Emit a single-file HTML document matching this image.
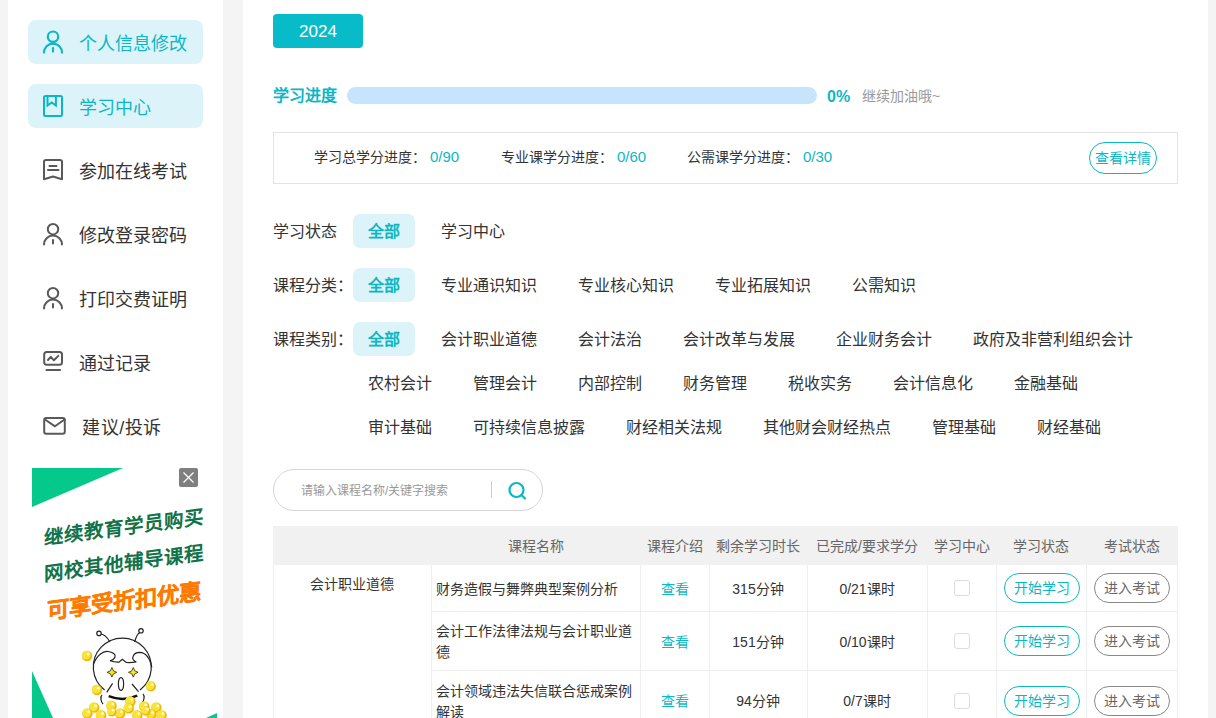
<!DOCTYPE html>
<html lang="zh-CN"><head><meta charset="utf-8">
<style>
*{box-sizing:border-box;margin:0;padding:0}
html,body{width:1216px;height:718px;overflow:hidden;background:#f4f4f4;font-family:"Liberation Sans",sans-serif;color:#333}
.side{position:absolute;left:8px;top:0;width:215px;height:718px;background:#fff}
.nav{position:absolute;left:28px;width:175px;height:44px;border-radius:8px;font-size:18px;color:#333;line-height:44px}
.nav.on{background:#dcf4f9;color:#0bb7c5}
.nav svg{position:absolute;left:0;top:0}
.nav span{position:absolute;left:51px;top:2px;white-space:nowrap}
.main{position:absolute;left:243px;top:0;width:965px;height:718px;background:#fff}
.abs{position:absolute}
.teal{color:#0bb7c5}
.stat{font-size:14px;line-height:22px;color:#333;white-space:nowrap}
.stat b{font-weight:normal;color:#0bb7c5;margin-left:4px;font-size:15px}
.frow{position:absolute;left:273px;width:905px;font-size:16px}
.frow .lab{position:absolute;left:0;top:0;width:80px;line-height:36px;white-space:nowrap}
.frow .items{position:absolute;left:80px;top:0;width:825px;display:flex;flex-wrap:wrap}
.frow i{font-style:normal;display:block;height:34px;line-height:36px;padding:0 15px;margin:0 11px 10px 0;border-radius:7px;white-space:nowrap}
.frow i.on{background:#dcf4f9;color:#0bb7c5;font-weight:bold}
.th{position:absolute;top:527px;height:39px;line-height:39px;text-align:center;font-size:14px;color:#666;white-space:nowrap}
.td{position:absolute;padding-top:2px;display:flex;align-items:center;justify-content:center;font-size:14px;line-height:21px;text-align:center}
.td.name{justify-content:flex-start;text-align:left}
.cb{display:block;margin-top:-2px;width:16px;height:16px;border:1px solid #ddd;border-radius:3px}
.btn{font-style:normal;display:block;margin-top:-2px;width:76px;height:30px;border-radius:15px;line-height:28px;text-align:center;font-size:14px}
.bt{border:1px solid #0bb7c5;color:#0bb7c5;margin-left:2px}
.bg{border:1px solid #888;color:#666}
.bt1{position:absolute;left:12px;width:160px;height:24px;line-height:24px;font-size:19.5px;font-weight:bold;white-space:nowrap;transform:skewY(-7.5deg);transform-origin:center center;text-align:center;letter-spacing:0}
.bt1.big{font-size:22.4px;font-weight:900;-webkit-text-stroke:0.3px #ff7a00}
.cl{}.cl2{}
</style></head><body>
<div class="side"></div>
<!-- sidebar nav -->
<div class="nav on" style="top:20px">
 <svg width="60" height="44" viewBox="28 20 60 44"><g fill="none" stroke="#0bb7c5" stroke-width="2.2" stroke-linecap="round"><circle cx="53" cy="36.7" r="5.2"/><path d="M44 52.6A9 9 0 0 1 62 52.6"/><path d="M53 48v3.6"/></g></svg>
 <span>个人信息修改</span></div>
<div class="nav on" style="top:84px">
 <svg width="60" height="44" viewBox="28 84 60 44"><g fill="none" stroke="#0bb7c5" stroke-width="2"><rect x="44" y="96" width="18" height="20" rx="1.5"/><path d="M47.5 96v9.5l4.2-3 4.2 3V96"/></g></svg>
 <span>学习中心</span></div>
<div class="nav" style="top:148px">
 <svg width="60" height="44" viewBox="28 148 60 44"><g fill="none" stroke="#595959" stroke-width="2" stroke-linejoin="round" stroke-linecap="round"><path d="M46 160h14a2 2 0 0 1 2 2v17.3l-9-2.8-9 2.8V162a2 2 0 0 1 2-2z"/><path d="M49.5 166h7M48 170h10.5"/></g></svg>
 <span>参加在线考试</span></div>
<div class="nav" style="top:212px">
 <svg width="60" height="44" viewBox="28 212 60 44"><g fill="none" stroke="#595959" stroke-width="2" stroke-linecap="round"><circle cx="53" cy="229.2" r="5.2"/><path d="M44 244.6A9 9 0 0 1 62 244.6"/><path d="M53 240v3.6"/></g></svg>
 <span>修改登录密码</span></div>
<div class="nav" style="top:276px">
 <svg width="60" height="44" viewBox="28 276 60 44"><g fill="none" stroke="#595959" stroke-width="2" stroke-linecap="round"><circle cx="53" cy="293.2" r="5.2"/><path d="M44 308.6A9 9 0 0 1 62 308.6"/><path d="M53 304v3.6"/></g></svg>
 <span>打印交费证明</span></div>
<div class="nav" style="top:340px">
 <svg width="60" height="44" viewBox="28 340 60 44"><g fill="none" stroke="#595959" stroke-width="2" stroke-linecap="round" stroke-linejoin="round"><rect x="44.2" y="351.9" width="17.8" height="12.8" rx="2.5"/><path d="M46.5 369.9h13.5"/><path d="M48 360l2.8-3.2 3.1 3.5 4.4-4.4"/></g></svg>
 <span>通过记录</span></div>
<div class="nav" style="top:404px">
 <svg width="60" height="44" viewBox="28 404 60 44"><g fill="none" stroke="#595959" stroke-width="2" stroke-linecap="round" stroke-linejoin="round"><rect x="44.2" y="418.1" width="20.6" height="15.6" rx="2"/><path d="M45 419.5l10 6.8 9.5-6.8"/></g></svg>
 <span style="left:54px;letter-spacing:0.6px">建议/投诉</span></div>


<div class="abs" style="left:32px;top:468px;width:185px;height:250px;overflow:hidden;background:#fff">
<svg width="185" height="250" viewBox="32 468 185 250" style="position:absolute;left:0;top:0">
<polygon points="32,468 123,468 32,507" fill="#05c98a"/>
<polygon points="32,671 32,718 53,718" fill="#05c98a"/>
<polygon points="217,713 217,718 206,718" fill="#05c98a"/>
<rect x="179" y="468" width="19" height="19" rx="2" fill="#7f7f7f"/>
<path d="M183.5 472.5l10 10M193.5 472.5l-10 10" stroke="#fff" stroke-width="1.3"/>
<g fill="none" stroke="#222" stroke-width="1.2">
<path d="M110 642C107 637 103 634 100.5 634"/><circle cx="99" cy="633.4" r="2.2" fill="#fff"/>
<path d="M134.6 642C136 637 138.5 633 140 632.5"/><circle cx="141" cy="630.8" r="2.2" fill="#fff"/>
<path d="M104.6 690A29 29 0 1 1 140 690"/>
<path d="M93.5 664C97 655 103 651 108 651.5c5 .5 8 3 7 5.5-1 2.5-3 3.5-5 3.8 3 1 6 1.5 9 1.3l3.3-2.8 4 3.2c3 .2 7 0 10-.6-2-.5-4-2.5-3.5-4.5.7-3 3.5-5 7-5 5 .3 10 5 12 15"/>
<ellipse cx="121" cy="684" rx="2.6" ry="6.3"/>
<path d="M112.6 683.3l-5.9 9.1M132 684l6.5 7.7"/>
<path d="M102 695c-2 2-1 7 1 9M143 694c2 2 1 7-1 9"/>
</g>
<path d="M108.7 696.2Q123 702 137.2 695.6" stroke="#111" stroke-width="2.5" fill="none"/>
<g fill="#ffe60a" stroke="#222" stroke-width="0.8">
<path d="M111.9 667.5l1.5 3.3 3.3 1.5-3.3 1.5-1.5 3.3-1.5-3.3-3.3-1.5 3.3-1.5z"/>
<path d="M133.3 667.5l1.5 3.3 3.3 1.5-3.3 1.5-1.5 3.3-1.5-3.3-3.3-1.5 3.3-1.5z"/>
</g>
<g><circle cx="87" cy="656" r="5.2" fill="#f2b705"/><circle cx="86.2" cy="655.2" r="4.4" fill="#f7e43a"/><circle cx="88.3" cy="654.2" r="1.4" fill="#fff" opacity="0.75"/><circle cx="97" cy="690" r="5.2" fill="#f2b705"/><circle cx="96.2" cy="689.2" r="4.4" fill="#f7e43a"/><circle cx="98.3" cy="688.2" r="1.4" fill="#fff" opacity="0.75"/><circle cx="151" cy="686.5" r="5" fill="#f2b705"/><circle cx="150.2" cy="685.7" r="4.2" fill="#f7e43a"/><circle cx="152.3" cy="684.7" r="1.4" fill="#fff" opacity="0.75"/><circle cx="130.5" cy="701.5" r="5.2" fill="#f2b705"/><circle cx="129.7" cy="700.7" r="4.4" fill="#f7e43a"/><circle cx="131.8" cy="699.7" r="1.4" fill="#fff" opacity="0.75"/><circle cx="94.3" cy="707.6" r="5.2" fill="#f2b705"/><circle cx="93.5" cy="706.8000000000001" r="4.4" fill="#f7e43a"/><circle cx="95.6" cy="705.8000000000001" r="1.4" fill="#fff" opacity="0.75"/><circle cx="111.5" cy="705.9" r="5.2" fill="#f2b705"/><circle cx="110.7" cy="705.1" r="4.4" fill="#f7e43a"/><circle cx="112.8" cy="704.1" r="1.4" fill="#fff" opacity="0.75"/><circle cx="128.8" cy="708.4" r="5.2" fill="#f2b705"/><circle cx="128.0" cy="707.6" r="4.4" fill="#f7e43a"/><circle cx="130.10000000000002" cy="706.6" r="1.4" fill="#fff" opacity="0.75"/><circle cx="144.4" cy="706.7" r="5.2" fill="#f2b705"/><circle cx="143.6" cy="705.9000000000001" r="4.4" fill="#f7e43a"/><circle cx="145.70000000000002" cy="704.9000000000001" r="1.4" fill="#fff" opacity="0.75"/><circle cx="156.4" cy="707.6" r="5.2" fill="#f2b705"/><circle cx="155.6" cy="706.8000000000001" r="4.4" fill="#f7e43a"/><circle cx="157.70000000000002" cy="705.8000000000001" r="1.4" fill="#fff" opacity="0.75"/><circle cx="87.4" cy="713.6" r="5.2" fill="#f2b705"/><circle cx="86.60000000000001" cy="712.8000000000001" r="4.4" fill="#f7e43a"/><circle cx="88.7" cy="711.8000000000001" r="1.4" fill="#fff" opacity="0.75"/><circle cx="101.2" cy="715.4" r="5.2" fill="#f2b705"/><circle cx="100.4" cy="714.6" r="4.4" fill="#f7e43a"/><circle cx="102.5" cy="713.6" r="1.4" fill="#fff" opacity="0.75"/><circle cx="120.2" cy="713.6" r="5.2" fill="#f2b705"/><circle cx="119.4" cy="712.8000000000001" r="4.4" fill="#f7e43a"/><circle cx="121.5" cy="711.8000000000001" r="1.4" fill="#fff" opacity="0.75"/><circle cx="137.4" cy="715.4" r="5.2" fill="#f2b705"/><circle cx="136.6" cy="714.6" r="4.4" fill="#f7e43a"/><circle cx="138.70000000000002" cy="713.6" r="1.4" fill="#fff" opacity="0.75"/><circle cx="151.3" cy="714.5" r="5.2" fill="#f2b705"/><circle cx="150.5" cy="713.7" r="4.4" fill="#f7e43a"/><circle cx="152.60000000000002" cy="712.7" r="1.4" fill="#fff" opacity="0.75"/><circle cx="161.6" cy="715.4" r="5.2" fill="#f2b705"/><circle cx="160.79999999999998" cy="714.6" r="4.4" fill="#f7e43a"/><circle cx="162.9" cy="713.6" r="1.4" fill="#fff" opacity="0.75"/><circle cx="112" cy="712" r="4.5" fill="#f2b705"/><circle cx="111.2" cy="711.2" r="3.7" fill="#f7e43a"/><circle cx="113.3" cy="710.2" r="1.4" fill="#fff" opacity="0.75"/><circle cx="146" cy="711" r="4.5" fill="#f2b705"/><circle cx="145.2" cy="710.2" r="3.7" fill="#f7e43a"/><circle cx="147.3" cy="709.2" r="1.4" fill="#fff" opacity="0.75"/></g>
</svg>
<div class="bt1" style="top:47px;color:#127249">继续教育学员购买</div>
<div class="bt1" style="top:83px;color:#127249">网校其他辅导课程</div>
<div class="bt1 big" style="top:122px;color:#ff7a00">可享受折扣优惠</div>
</div>
<div class="main"></div>
<div class="abs" style="left:273px;top:14px;width:90px;height:34px;background:#07bcc8;border-radius:4px;color:#fff;font-size:17px;line-height:35px;text-align:center">2024</div>
<div class="abs teal" style="left:273px;top:84px;font-size:16px;line-height:24px;font-weight:bold">学习进度</div>
<div class="abs" style="left:347px;top:87px;width:470px;height:17px;border-radius:8.5px;background:#c6e4fc"></div>
<div class="abs teal" style="left:827px;top:85px;font-size:16px;line-height:24px;font-weight:bold">0%</div>
<div class="abs" style="left:862px;top:85px;font-size:14px;line-height:22px;color:#999">继续加油哦~</div>
<div class="abs" style="left:273px;top:132px;width:905px;height:52px;border:1px solid #e3e3e3"></div>
<div class="abs stat" style="left:314px;top:146px">学习总学分进度<span class="cl2">：</span><b>0/90</b></div>
<div class="abs stat" style="left:501px;top:146px">专业课学分进度<span class="cl2">：</span><b>0/60</b></div>
<div class="abs stat" style="left:687px;top:146px">公需课学分进度<span class="cl2">：</span><b>0/30</b></div>
<div class="abs" style="left:1089px;top:142px;width:68px;height:32px;border:1px solid #0bb7c5;border-radius:16px;color:#0bb7c5;font-size:14px;line-height:30px;text-align:center">查看详情</div>

<div class="frow" style="top:214px"><div class="lab">学习状态</div><div class="items"><i class="on">全部</i><i>学习中心</i></div></div>
<div class="frow" style="top:268px"><div class="lab">课程分类<span class="cl">：</span></div><div class="items"><i class="on">全部</i><i>专业通识知识</i><i>专业核心知识</i><i>专业拓展知识</i><i>公需知识</i></div></div>
<div class="frow" style="top:322px"><div class="lab">课程类别<span class="cl">：</span></div><div class="items"><i class="on">全部</i><i>会计职业道德</i><i>会计法治</i><i>会计改革与发展</i><i>企业财务会计</i><i>政府及非营利组织会计</i><i>农村会计</i><i>管理会计</i><i>内部控制</i><i>财务管理</i><i>税收实务</i><i>会计信息化</i><i>金融基础</i><i>审计基础</i><i>可持续信息披露</i><i>财经相关法规</i><i>其他财会财经热点</i><i>管理基础</i><i>财经基础</i></div></div>

<div class="abs" style="left:273px;top:469px;width:270px;height:42px;border:1px solid #d6d6d6;border-radius:21px"></div>
<div class="abs" style="left:301px;top:482px;font-size:12px;line-height:18px;color:#999">请输入课程名称/关键字搜索</div>
<div class="abs" style="left:491px;top:481px;width:1px;height:17px;background:#ccc"></div>
<svg class="abs" style="left:500px;top:475px" width="36" height="30" viewBox="500 475 36 30"><g fill="none" stroke="#0bb7c5" stroke-width="2.2" stroke-linecap="round"><circle cx="516.5" cy="490" r="7"/><path d="M521.5 495l3.5 3.5"/></g></svg>
<div class="abs" style="left:273px;top:526px;width:905px;height:39px;background:#f1f1f1"></div>
<div class="th" style="left:431px;width:209px">课程名称</div>
<div class="th" style="left:640px;width:69px">课程介绍</div>
<div class="th" style="left:709px;width:98px">剩余学习时长</div>
<div class="th" style="left:807px;width:120px">已完成/要求学分</div>
<div class="th" style="left:927px;width:69px">学习中心</div>
<div class="th" style="left:996px;width:90px">学习状态</div>
<div class="th" style="left:1086px;width:92px">考试状态</div>
<div class="abs" style="left:273px;top:565px;width:1px;height:160px;background:#eee"></div>
<div class="abs" style="left:1177px;top:565px;width:1px;height:160px;background:#eee"></div>
<div class="abs" style="left:431px;top:565px;width:1px;height:160px;background:#eee"></div>
<div class="abs" style="left:640px;top:565px;width:1px;height:160px;background:#eee"></div>
<div class="abs" style="left:709px;top:565px;width:1px;height:160px;background:#eee"></div>
<div class="abs" style="left:807px;top:565px;width:1px;height:160px;background:#eee"></div>
<div class="abs" style="left:927px;top:565px;width:1px;height:160px;background:#eee"></div>
<div class="abs" style="left:996px;top:565px;width:1px;height:160px;background:#eee"></div>
<div class="abs" style="left:1086px;top:565px;width:1px;height:160px;background:#eee"></div>
<div class="abs" style="left:431px;top:611px;width:747px;height:1px;background:#eee"></div>
<div class="abs" style="left:431px;top:670px;width:747px;height:1px;background:#eee"></div>
<div class="abs" style="left:273px;top:574px;width:158px;text-align:center;font-size:14px;line-height:21px">会计职业道德</div>
<div class="td name" style="left:436px;top:565px;width:199px;height:46px"><span>财务造假与舞弊典型案例分析</span></div>
<div class="td teal" style="left:640px;top:565px;width:69px;height:46px">查看</div>
<div class="td" style="left:709px;top:565px;width:98px;height:46px">315分钟</div>
<div class="td" style="left:807px;top:565px;width:120px;height:46px">0/21课时</div>
<div class="td" style="left:927px;top:565px;width:69px;height:46px"><i class="cb"></i></div>
<div class="td" style="left:996px;top:565px;width:90px;height:46px"><i class="btn bt">开始学习</i></div>
<div class="td" style="left:1086px;top:565px;width:92px;height:46px"><i class="btn bg">进入考试</i></div>
<div class="td name" style="left:436px;top:612px;width:199px;height:58px"><span>会计工作法律法规与会计职业道德</span></div>
<div class="td teal" style="left:640px;top:612px;width:69px;height:58px">查看</div>
<div class="td" style="left:709px;top:612px;width:98px;height:58px">151分钟</div>
<div class="td" style="left:807px;top:612px;width:120px;height:58px">0/10课时</div>
<div class="td" style="left:927px;top:612px;width:69px;height:58px"><i class="cb"></i></div>
<div class="td" style="left:996px;top:612px;width:90px;height:58px"><i class="btn bt">开始学习</i></div>
<div class="td" style="left:1086px;top:612px;width:92px;height:58px"><i class="btn bg">进入考试</i></div>
<div class="td name" style="left:436px;top:671px;width:199px;height:59px"><span>会计领域违法失信联合惩戒案例解读</span></div>
<div class="td teal" style="left:640px;top:671px;width:69px;height:59px">查看</div>
<div class="td" style="left:709px;top:671px;width:98px;height:59px">94分钟</div>
<div class="td" style="left:807px;top:671px;width:120px;height:59px">0/7课时</div>
<div class="td" style="left:927px;top:671px;width:69px;height:59px"><i class="cb"></i></div>
<div class="td" style="left:996px;top:671px;width:90px;height:59px"><i class="btn bt">开始学习</i></div>
<div class="td" style="left:1086px;top:671px;width:92px;height:59px"><i class="btn bg">进入考试</i></div>
</body></html>
